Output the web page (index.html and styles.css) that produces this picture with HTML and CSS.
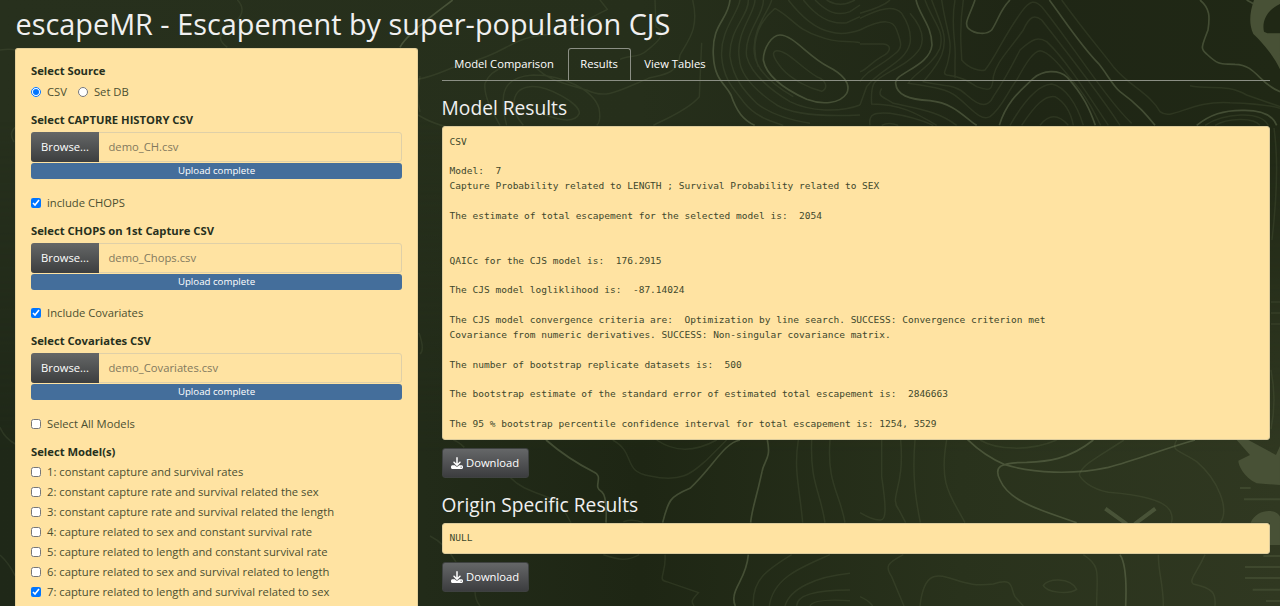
FILE: index.html
```html
<!DOCTYPE html>
<html lang="en">
<head>
<meta charset="utf-8">
<title>escapeMR</title>
<link rel="stylesheet" href="styles.css">
</head>
<body>
<svg class="topo" width="1280" height="606" viewBox="0 0 1280 606" aria-hidden="true">
  <defs>
    <linearGradient id="g" x1="0" y1="0" x2="1" y2="0"><stop offset="0" stop-color="#27301d"/><stop offset=".5" stop-color="#262f1b"/><stop offset=".8" stop-color="#1f2615"/><stop offset="1" stop-color="#202815"/></linearGradient>
    <linearGradient id="h" x1="0" y1="0" x2="1" y2="0"><stop offset="0" stop-color="#1f2818"/><stop offset=".33" stop-color="#222b19"/><stop offset=".5" stop-color="#1e2614"/><stop offset=".75" stop-color="#29321c"/><stop offset="1" stop-color="#303821"/></linearGradient>
    <linearGradient id="f" x1="0" y1="0" x2="0" y2="1"><stop offset=".2" stop-color="#000"/><stop offset=".75" stop-color="#fff"/></linearGradient>
    <mask id="m"><rect width="1280" height="606" fill="url(#f)"/></mask>
  </defs>
  <rect width="1280" height="606" fill="url(#g)"/>
  <rect width="1280" height="606" fill="url(#h)" mask="url(#m)"/>
  <!-- left part of the top band -->
  <g transform="scale(.33333)">
    <path class="l" d="M712 0C740 28 722 55 695 75C650 103 655 122 682 142M0 150Q30 146 46 150M46 382Q25 400 42 426M0 1282Q14 1315 46 1332M0 1665Q26 1688 46 1728"/>
  </g>
  <!-- centre of the top band -->
  <g transform="translate(400 0) scale(.33333)">
    <path class="b" d="M0 142C20 100 120 30 158 0M990 0C985 60 935 70 940 165C943 240 975 250 993 285C1010 335 1030 360 1064 376M1140 105C1115 105 1090 145 1090 180C1100 235 1170 275 1220 298C1265 315 1320 312 1340 280C1355 250 1325 220 1285 200C1225 170 1180 105 1140 105Z"/>
    <path class="l" d="M54 238C120 225 140 205 200 190C310 160 320 130 390 112C450 100 505 100 535 77C575 50 610 35 622 28L600 0M765 0L768 80C800 100 780 120 745 148C720 174 690 165 660 178M878 0C900 90 860 125 840 165C835 225 780 225 745 235C660 270 620 300 560 270C490 250 440 240 400 195C350 185 275 198 255 250C250 290 280 340 300 376M905 128L898 290C865 330 790 360 760 376M54 345Q95 370 140 380M320 376C295 280 310 230 400 225C490 225 580 270 597 325Q604 365 590 376M370 376C325 325 335 265 390 260C440 255 540 310 538 340C525 370 475 360 430 342M1020 0C1015 40 960 90 965 170C970 240 1005 270 1030 305C1070 355 1120 365 1150 376M1045 0C1048 45 985 90 990 170C1000 240 1040 280 1070 310C1115 345 1170 360 1230 370M1065 0C1065 40 1005 100 1018 175C1020 235 1085 285 1130 315C1180 345 1280 350 1380 345M1090 0C1095 40 1030 100 1040 170C1055 225 1120 275 1170 305C1230 335 1320 338 1380 315M1115 0C1110 30 1055 85 1063 160C1068 210 1120 255 1180 290M1125 25C1060 80 1055 150 1075 200M1125 25C1180 55 1190 90 1260 110C1310 132 1340 120 1380 128M1165 0C1200 45 1240 85 1290 95C1320 105 1350 100 1380 90M1210 0C1250 50 1290 75 1340 68L1380 50M1245 0C1280 35 1310 50 1350 35L1380 15M1280 0Q1320 25 1365 0M1130 152C1110 155 1125 180 1145 205C1175 240 1230 265 1265 274C1285 265 1280 240 1250 230C1200 200 1160 150 1130 152Z"/>
  </g>
  <!-- right part of the top band -->
  <g transform="translate(860 0) scale(.33333)">
    <path class="b" d="M168 0C180 50 215 75 216 135C210 200 100 220 107 250C110 285 145 298 210 302C285 310 315 355 350 376M345 0C330 45 310 70 325 85C345 103 380 105 395 90C415 60 420 30 450 0M568 0C620 70 665 140 715 190C740 220 760 260 780 275C835 315 860 345 885 376M418 376C440 300 490 265 520 235C550 210 595 208 622 232C670 285 690 330 706 376M1020 0C1050 25 1050 50 1044 90C1025 140 1020 145 1040 162C1080 200 1085 190 1125 193C1190 195 1195 250 1260 275M1160 0L1182 12M1010 376C1050 345 1090 330 1150 331C1210 330 1240 350 1250 376"/>
    <path class="l" d="M0 40Q70 20 90 0M0 55C60 25 100 15 125 40C145 70 155 100 150 130C135 190 60 205 20 260L0 315M0 90C70 55 100 60 110 90C125 130 130 145 100 165C60 200 20 210 0 245M0 132L70 132C95 135 95 155 65 170C30 190 20 210 0 215M150 40C185 80 195 115 180 145C145 200 60 220 42 250Q32 270 35 312C120 312 170 340 230 376M195 0C220 70 255 90 240 145C215 200 160 220 145 250C210 260 260 265 290 290C330 320 360 365 390 350C425 325 440 280 470 240C500 185 520 155 540 152C570 155 610 210 640 245C690 300 705 345 722 376M215 0C245 80 265 110 245 165C230 200 210 220 190 245C250 260 285 250 320 285C365 325 385 320 400 290C430 245 450 210 480 150C520 115 535 110 560 125C620 180 700 310 745 376M245 0C260 100 280 120 265 180C260 210 245 220 260 225C300 230 320 240 350 260C390 275 398 270 400 230C410 185 440 160 490 90C510 45 525 45 545 60C600 130 730 300 780 376M285 0C270 80 290 130 285 180L285 235M310 0C295 100 305 140 305 180C325 205 360 215 375 210C405 175 430 110 485 35C510 0 525 0 545 20C620 110 740 300 815 370M605 0C670 90 730 160 760 200C810 260 870 280 900 335C935 365 990 300 1110 308C1170 310 1230 315 1260 325M990 257C1050 270 1100 250 1160 285L1260 320M65 265C50 290 70 290 100 310C190 330 235 335 290 376M30 376C25 345 40 335 90 340Q160 350 220 376M65 376Q85 365 115 376M450 376C485 315 530 255 575 252C615 260 650 310 670 376M485 376C525 315 555 285 585 290C620 310 635 350 640 376M540 376Q580 325 625 376M1035 376C1090 340 1200 330 1225 376M1065 376C1100 355 1180 350 1200 376"/>
    <path class="s" d="M1182 0H1260V12C1220 30 1205 65 1212 95L1222 100H1260V208C1240 165 1205 125 1180 102C1165 70 1170 35 1182 0Z"/>
  </g>
  <!-- lower band, beneath the result panels -->
  <g transform="translate(430 430) scale(.33333)">
    <path class="b" d="M348 30C400 75 450 105 490 125C525 140 485 170 515 185Q532 200 528 278M930 30C880 40 850 110 780 175C720 200 715 210 698 278M1012 30C1025 90 1000 90 995 130C975 220 965 240 962 278M955 374C950 440 915 465 912 500Q910 515 916 528"/>
    <path class="l" d="M70 30Q85 35 103 52M240 142C285 190 350 190 385 220C410 245 410 260 423 278M0 318Q45 340 78 396M135 484Q135 510 150 528M548 30C620 70 575 125 660 138C760 160 790 125 830 90L890 30M680 30Q760 85 860 30M520 374C570 390 590 395 628 374M580 275Q610 265 640 278M705 374C710 430 680 450 710 455L805 488C780 515 785 515 792 528M1105 30C1090 120 1110 180 1118 278M1145 30C1140 160 1170 180 1185 278M1200 30C1190 160 1230 190 1245 278M1085 374C1010 420 965 450 970 528M1200 374C1120 410 1030 440 1018 528M1260 430C1160 440 1080 475 1065 528M1100 528Q1100 480 1260 480M1140 528Q1150 505 1260 512"/>
  </g>
  <g transform="translate(860 430) scale(.33333)">
    <path class="b" d="M322 28C360 65 390 85 435 104C520 130 640 135 745 112C830 90 900 60 1005 30M700 30C625 90 560 95 500 97C420 97 400 110 420 150C450 220 560 245 650 278M780 374C798 400 800 460 797 528"/>
    <path class="l" d="M65 30L65 140C80 240 78 270 62 270Q40 272 0 248M122 30C135 180 85 200 117 240L137 278M165 30C155 150 170 220 181 278M260 30C235 170 275 200 315 278M360 30C410 60 510 65 590 30M792 30C700 90 665 105 658 135C665 150 690 175 745 187C850 195 930 215 935 255Q938 268 934 278M950 30C930 65 960 60 1010 95C1075 150 1110 240 1080 278M130 374C80 400 75 410 95 440L132 528M180 528C190 440 220 430 260 442C310 455 330 470 400 462C465 440 450 475 465 500L490 528M550 467C560 445 630 440 650 478C625 495 560 487 550 467ZM670 374C725 410 710 430 710 528M895 374C895 430 910 460 910 528M1035 374C1010 430 985 450 1000 462C1060 475 1068 490 1065 528M0 500Q25 510 38 528"/>
    <path class="s" d="M1130 30H1165L1248 75L1260 48V165L1190 160C1150 140 1135 105 1135 92L1170 75ZM1172 278C1190 235 1250 235 1260 260V345L1230 345V278Z"/>
    <path class="x" d="M736 236L800 282M886 236L824 282"/>
    <path class="y" d="M1140 174H1172M1152 208H1260M1210 378H1260M1155 411H1260M1155 444H1260M1178 479H1260M1218 513H1260"/>
  </g>
  <path class="l" d="M420 76Q416 98 420 112M419 333Q425 350 420 354M1274 128Q1280 170 1272 240M1271 302H1280M1271 313H1280M1271 324H1280M1271 370Q1277 400 1271 429"/>
</svg>

<h1 class="title">escapeMR - Escapement by super-population CJS</h1>
<div class="layout">
  <form class="sidebar">
    <div class="label">Select Source</div>
    <div class="radios">
      <label class="opt"><input type="radio" name="src" checked>CSV</label>
      <label class="opt"><input type="radio" name="src">Set DB</label>
    </div>

    <div class="label">Select CAPTURE HISTORY CSV</div>
    <div class="file"><span class="browse">Browse...</span><span class="name">demo_CH.csv</span></div>
    <div class="progress">Upload complete</div>
    <label class="opt check"><input type="checkbox" checked>include CHOPS</label>

    <div class="label">Select CHOPS on 1st Capture CSV</div>
    <div class="file"><span class="browse">Browse...</span><span class="name">demo_Chops.csv</span></div>
    <div class="progress">Upload complete</div>
    <label class="opt check"><input type="checkbox" checked>Include Covariates</label>

    <div class="label">Select Covariates CSV</div>
    <div class="file"><span class="browse">Browse...</span><span class="name">demo_Covariates.csv</span></div>
    <div class="progress">Upload complete</div>
    <label class="opt check"><input type="checkbox">Select All Models</label>

    <div class="label">Select Model(s)</div>
    <div class="models">
      <label class="opt"><input type="checkbox">1: constant capture and survival rates</label>
      <label class="opt"><input type="checkbox">2: constant capture rate and survival related the sex</label>
      <label class="opt"><input type="checkbox">3: constant capture rate and survival related the length</label>
      <label class="opt"><input type="checkbox">4: capture related to sex and constant survival rate</label>
      <label class="opt"><input type="checkbox">5: capture related to length and constant survival rate</label>
      <label class="opt"><input type="checkbox">6: capture related to sex and survival related to length</label>
      <label class="opt"><input type="checkbox" checked>7: capture related to length and survival related to sex</label>
    </div>
  </form>

  <main class="main">
    <nav class="tabs">
      <a class="tab">Model Comparison</a>
      <a class="tab active">Results</a>
      <a class="tab">View Tables</a>
    </nav>
    <h3 class="heading">Model Results</h3>
<pre class="output">CSV

Model:  7
Capture Probability related to LENGTH ; Survival Probability related to SEX

The estimate of total escapement for the selected model is:  2054


QAICc for the CJS model is:  176.2915

The CJS model logliklihood is:  -87.14024

The CJS model convergence criteria are:  Optimization by line search. SUCCESS: Convergence criterion met
Covariance from numeric derivatives. SUCCESS: Non-singular covariance matrix.

The number of bootstrap replicate datasets is:  500

The bootstrap estimate of the standard error of estimated total escapement is:  2846663

The 95 % bootstrap percentile confidence interval for total escapement is: 1254, 3529</pre>
    <a class="download"><svg class="icon" viewBox="0 0 512 512"><path d="M288 32c0-17.700-14.300-32-32-32s-32 14.300-32 32v242.700l-73.400-73.400c-12.500-12.500-32.800-12.500-45.300 0s-12.500 32.800 0 45.300l128 128c12.500 12.500 32.800 12.500 45.300 0l128-128c12.500-12.500 12.500-32.800 0-45.300s-32.800-12.500-45.300 0L288 274.700V32zM64 352c-35.300 0-64 28.700-64 64v32c0 35.300 28.700 64 64 64h384c35.300 0 64-28.700 64-64v-32c0-35.300-28.700-64-64-64H346.500l-45.300 45.300c-25 25-65.500 25-90.500 0L165.500 352H64zm368 56a24 24 0 1 1 0 48 24 24 0 1 1 0-48z"/></svg>Download</a>
    <h3 class="heading second">Origin Specific Results</h3>
<pre class="output null">NULL</pre>
    <a class="download"><svg class="icon" viewBox="0 0 512 512"><path d="M288 32c0-17.700-14.300-32-32-32s-32 14.300-32 32v242.700l-73.400-73.400c-12.500-12.500-32.800-12.500-45.300 0s-12.500 32.800 0 45.300l128 128c12.500 12.500 32.800 12.500 45.300 0l128-128c12.500-12.500 12.500-32.800 0-45.300s-32.800-12.500-45.300 0L288 274.700V32zM64 352c-35.300 0-64 28.700-64 64v32c0 35.300 28.700 64 64 64h384c35.300 0 64-28.700 64-64v-32c0-35.300-28.700-64-64-64H346.500l-45.300 45.300c-25 25-65.500 25-90.500 0L165.500 352H64zm368 56a24 24 0 1 1 0 48 24 24 0 1 1 0-48z"/></svg>Download</a>
  </main>
</div>
</body>
</html>
```

FILE: styles.css
```css
* { box-sizing: border-box; }
html, body { height: 606px; overflow: hidden; }
body {
  margin: 0;
  background: #252e1b;
  color: #f0f0f0;
  font: 11.240px/18px "Open Sans", "Noto Sans", sans-serif;
}
.topo { position: absolute; left: 0; top: 0; z-index: -1; }
.topo .l, .topo .b, .topo .x, .topo .y { fill: none; stroke: #7e8b66; }
.topo .l { stroke-opacity: .15; stroke-width: 4.500; }
.topo > .l { stroke-width: 1.5; }
.topo .b { stroke-opacity: .38; stroke-width: 5; }
.topo .x { stroke-opacity: .35; stroke-width: 12; }
.topo .y { stroke-opacity: .2; stroke-width: 6; }
.topo .s { fill: #485136; }

.title { margin: 0; padding: 4px 0 0 15.500px; height: 48px; font-size: 28.850px; line-height: 40px; font-weight: 400; white-space: nowrap; }
.layout { display: flex; align-items: flex-start; gap: 24px; padding-left: 15px; }

.sidebar { width: 403px; height: 558px; padding: 13px 15px 0; border: 1px solid #e6d09a; border-bottom: 0; border-radius: 3px 3px 0 0; background: #ffe3a2; color: #4b4f31; }
.label { height: 18px; font-weight: 700; color: #27301d; }
.radios { display: flex; gap: 11px; height: 18px; margin: 3px 0 10px; }
.opt { display: flex; align-items: center; height: 18px; white-space: nowrap; }
.opt input { width: 10px; height: 10px; margin: 0 6px 0 0; }
.file { display: flex; height: 30px; margin-top: 3px; border: 1px solid #dfd0a8; border-radius: 3px; line-height: 28px; }
.browse { width: 68px; margin: -1px 0 -1px -1px; line-height: 30px; text-align: center; color: #fff; background: linear-gradient(#656767, #3c3e3f); border-radius: 3px 0 0 3px; }
.name { padding-left: 9.500px; color: #82795e; }
.progress { height: 16px; margin: 1px 0 14.700px; border-radius: 3px; background: #446e9b; color: #fff; font-size: 9.700px; line-height: 16px; text-align: center; }
.check { margin-bottom: 10px; }
.models { display: grid; gap: 2.050px; margin-top: 2px; }

.main { width: 828px; margin-left: -.4px; }
.tabs { display: flex; gap: 1px; height: 33px; border-bottom: 1px solid #8b8f84; color: #fff; }
.tab { height: 32px; padding: 6px 11.700px 0; border: 1px solid transparent; border-bottom: 0; border-radius: 3px 3px 0 0; line-height: 18px; white-space: nowrap; }
.active { border-color: #8b8f84; }
.heading { margin: 12.500px 0 5.500px; height: 27px; font-size: 19.200px; line-height: 27px; font-weight: 400; }
.second { margin: 13px 0 5px; }
.output { margin: 0; padding: 7.500px 7px 6.500px; border: 1px solid #dccb9c; border-radius: 3px; background: #ffe3a2; color: #40482c; font: 9.520px/14.870px "DejaVu Sans Mono", monospace; }
.null { padding: 7.500px 7px; }
.download { display: flex; align-items: center; justify-content: center; width: 87px; height: 30px; margin-top: 8px; border-radius: 3px; background: linear-gradient(#656768, #3c3d3f); border: 1px solid #3e4140; color: #fff; }
.icon { width: 12px; height: 12px; margin-right: 3px; fill: #fff; }
```
